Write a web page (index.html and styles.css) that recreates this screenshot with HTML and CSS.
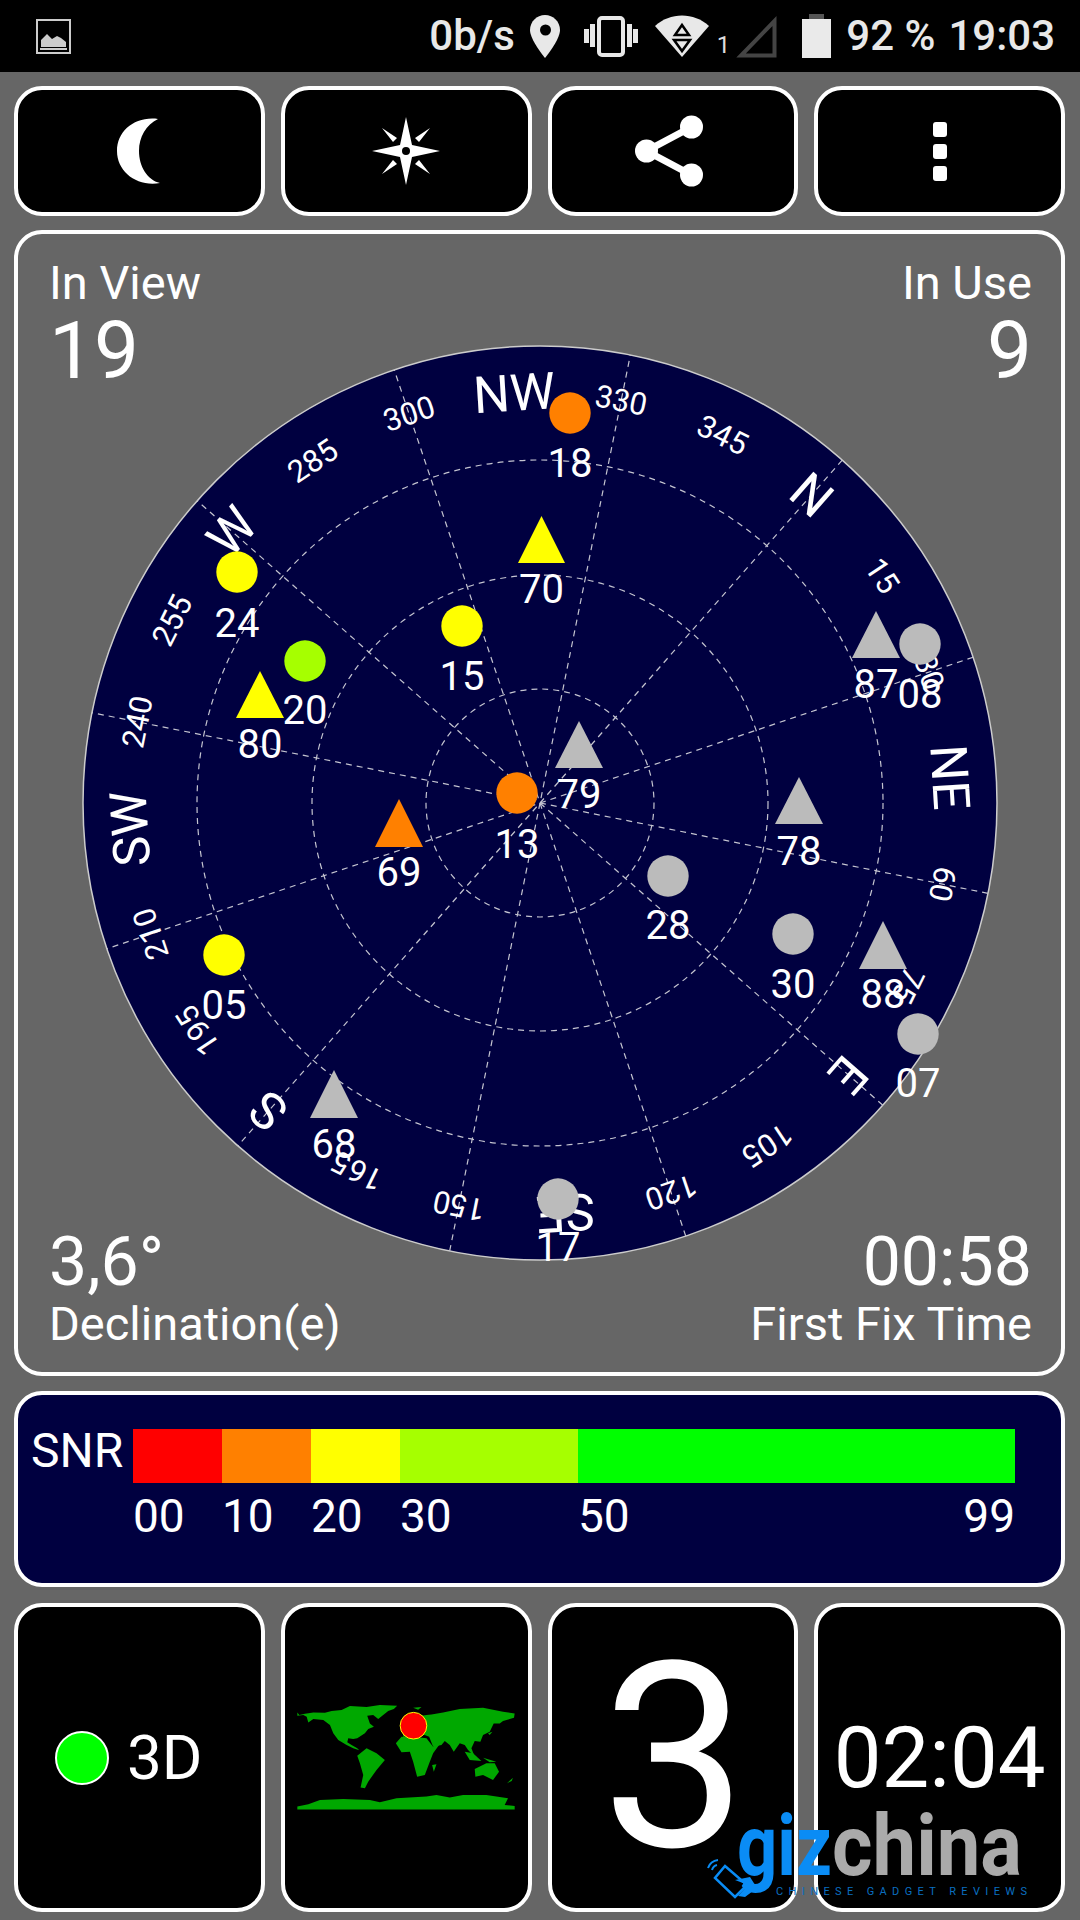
FILE: index.html
```html
<!DOCTYPE html>
<html>
<head>
    <title>GPS Test</title>
    <link rel="stylesheet" href="styles.css">
</head>
<body>
    <div class="statusbar">
        <svg class="ic-image" width="35" height="35" viewBox="0 0 35 35">
            <rect x="1" y="1" width="33" height="33" fill="none" stroke="#ccc" stroke-width="2"/>
            <path d="M5 28V21L11 15L16 20L21 17L25 19L30 23V28Z" fill="#ccc"/>
            <rect x="4" y="29" width="27" height="2" fill="#ccc"/>
        </svg>
        <span class="st-text st-speed">0b/s</span>
        <svg class="ic-pin" width="30" height="43" viewBox="0 0 30 43">
            <path d="M15 0C6.7 0 0 6.7 0 15C0 25 15 43 15 43C15 43 30 25 30 15C30 6.7 23.3 0 15 0Z" fill="#e8e8e8"/>
            <circle cx="15.5" cy="15" r="5.5" fill="#000"/>
        </svg>
        <svg class="ic-vibrate" width="54" height="41" viewBox="0 0 54 41">
            <rect x="15" y="2" width="24" height="37" rx="3" fill="none" stroke="#e8e8e8" stroke-width="4"/>
            <rect x="0" y="13" width="5" height="14" fill="#e8e8e8"/>
            <rect x="6" y="8" width="5" height="23" fill="#e8e8e8"/>
            <rect x="43" y="8" width="5" height="23" fill="#e8e8e8"/>
            <rect x="49" y="13" width="5" height="14" fill="#e8e8e8"/>
        </svg>
        <svg class="ic-wifi" width="54" height="43" viewBox="0 0 54 43">
            <path d="M0 11C15 -3 39 -3 54 11L27 42Z" fill="#e8e8e8"/>
            <path d="M27 10L34 20H20Z" fill="#e8e8e8" stroke="#000" stroke-width="2.5"/>
            <path d="M19 25H35L27 36Z" fill="#e8e8e8" stroke="#000" stroke-width="2.5"/>
        </svg>
        <span class="st-sim">1</span>
        <svg class="ic-signal" width="42" height="43" viewBox="0 0 42 43">
            <path d="M39.500 6V40.500H6Z" fill="none" stroke="#444" stroke-width="4"/>
        </svg>
        <svg class="ic-battery" width="29" height="44" viewBox="0 0 29 44">
            <rect x="7" y="0" width="15" height="6" fill="#555"/>
            <rect x="0" y="5" width="29" height="39" fill="#eaeaea"/>
        </svg>
        <span class="st-text st-batt">92 %</span>
        <span class="st-text st-time">19:03</span>
    </div>

    <div class="screen">
        <div class="toolbar">
            <div class="card">
                <svg width="44" height="66" viewBox="0 0 44 66">
                    <path d="M41 1C18 -2 0 13 0 33C0 54 20 69 43 65C30 62 22 48 22 33C22 19 29 7 41 1Z" fill="#fff"/>
                </svg>
            </div>
            <div class="card">
                <svg width="70" height="70" viewBox="-35 -35 70 70">
                    <path d="M0 -34L6 -6L34 0L6 6L0 34L-6 6L-34 0L-6 -6Z" fill="#fff"/>
                    <path d="M-24 -23L-9 -13L-13 -9Z M24 -23L9 -13L13 -9Z M-24 23L-9 13L-13 9Z M24 23L9 13L13 9Z" fill="#fff"/>
                    <circle r="4" fill="#000"/>
                </svg>
            </div>
            <div class="card">
                <svg class="ic-share" width="68" height="72" viewBox="0 0 68 72">
                    <path d="M56.500 12L11.500 36L56.500 60" fill="none" stroke="#fff" stroke-width="7"/>
                    <circle cx="56.500" cy="12" r="11.500" fill="#fff"/>
                    <circle cx="11.500" cy="36" r="11.500" fill="#fff"/>
                    <circle cx="56.500" cy="60" r="11.500" fill="#fff"/>
                </svg>
            </div>
            <div class="card">
                <div class="dots"><i></i><i></i><i></i></div>
            </div>
        </div>

        <div class="sky-panel">
            <div class="sky-row">
                <div>
                    <div class="sky-label">In View</div>
                    <div class="sky-count">19</div>
                </div>
                <div class="right">
                    <div class="sky-label">In Use</div>
                    <div class="sky-count">9</div>
                </div>
            </div>

            <svg class="sky-plot" width="930" height="930" viewBox="75 338 930 930">
                <g transform="translate(540 803)">
                    <circle class="disc" r="457"/>
                    <circle class="grid" r="114"/>
                    <circle class="grid" r="228"/>
                    <circle class="grid" r="343"/>
                    <g class="grid">
                        <path transform="rotate(41.4)" d="M0 -457V457"/>
                        <path transform="rotate(71.4)" d="M0 -457V457"/>
                        <path transform="rotate(101.4)" d="M0 -457V457"/>
                        <path transform="rotate(131.4)" d="M0 -457V457"/>
                        <path transform="rotate(161.4)" d="M0 -457V457"/>
                        <path transform="rotate(191.4)" d="M0 -457V457"/>
                    </g>
                    <g class="compass">
                        <text transform="rotate(41.4)" y="-393">N</text>
                        <text transform="rotate(86.4)" y="-393">NE</text>
                        <text transform="rotate(131.4)" y="-393">E</text>
                        <text transform="rotate(176.4)" y="-393">SE</text>
                        <text transform="rotate(221.4)" y="-393">S</text>
                        <text transform="rotate(266.4)" y="-393">SW</text>
                        <text transform="rotate(311.4)" y="-393">W</text>
                        <text transform="rotate(356.4)" y="-393">NW</text>
                    </g>
                    <g class="degrees">
                        <text transform="rotate(56.4)" y="-400">15</text>
                        <text transform="rotate(71.4)" y="-400">30</text>
                        <text transform="rotate(101.4)" y="-400">60</text>
                        <text transform="rotate(116.4)" y="-400">75</text>
                        <text transform="rotate(146.4)" y="-400">105</text>
                        <text transform="rotate(161.4)" y="-400">120</text>
                        <text transform="rotate(191.4)" y="-400">150</text>
                        <text transform="rotate(206.4)" y="-400">165</text>
                        <text transform="rotate(236.4)" y="-400">195</text>
                        <text transform="rotate(251.4)" y="-400">210</text>
                        <text transform="rotate(281.4)" y="-400">240</text>
                        <text transform="rotate(296.4)" y="-400">255</text>
                        <text transform="rotate(326.4)" y="-400">285</text>
                        <text transform="rotate(341.4)" y="-400">300</text>
                        <text transform="rotate(11.4)" y="-400">330</text>
                        <text transform="rotate(26.4)" y="-400">345</text>
                    </g>
                </g>

                <!-- satellites -->
                <circle class="s-orange" cx="570" cy="413" r="20.700"/>
                <text class="sat" x="570" y="477">18</text>
                <path class="s-yellow" d="M541.500 516L565 563H518Z"/>
                <text class="sat" x="541.500" y="603">70</text>
                <circle class="s-yellow" cx="237" cy="572" r="20.700"/>
                <text class="sat" x="237" y="637">24</text>
                <circle class="s-lime" cx="305" cy="661" r="20.700"/>
                <text class="sat" x="305" y="724">20</text>
                <circle class="s-yellow" cx="462" cy="626" r="20.700"/>
                <text class="sat" x="462" y="690">15</text>
                <path class="s-yellow" d="M260 671L284 718H236Z"/>
                <text class="sat" x="260" y="758">80</text>
                <path class="s-orange" d="M399 799L423 847H375Z"/>
                <text class="sat" x="399" y="886">69</text>
                <circle class="s-orange" cx="517" cy="793" r="20.700"/>
                <text class="sat" x="517" y="858">13</text>
                <path class="s-grey" d="M579 721L603 768H555Z"/>
                <text class="sat" x="579" y="808">79</text>
                <path class="s-grey" d="M799 777L823 824H775Z"/>
                <text class="sat" x="799" y="865">78</text>
                <path class="s-grey" d="M876 611L900 658H852Z"/>
                <text class="sat" x="876" y="698">87</text>
                <circle class="s-grey" cx="920" cy="644" r="20.700"/>
                <text class="sat" x="920" y="708">08</text>
                <circle class="s-grey" cx="668" cy="876" r="20.700"/>
                <text class="sat" x="668" y="939">28</text>
                <circle class="s-grey" cx="793" cy="934" r="20.700"/>
                <text class="sat" x="793" y="998">30</text>
                <path class="s-grey" d="M883 921L907 969H859Z"/>
                <text class="sat" x="883" y="1008">88</text>
                <circle class="s-grey" cx="918" cy="1034" r="20.700"/>
                <text class="sat" x="918" y="1097">07</text>
                <circle class="s-yellow" cx="224" cy="955" r="20.700"/>
                <text class="sat" x="224" y="1019">05</text>
                <path class="s-grey" d="M334 1070L358 1118H310Z"/>
                <text class="sat" x="334" y="1158">68</text>
                <circle class="s-grey" cx="558" cy="1199" r="20.700"/>
                <text class="sat" x="558" y="1261">17</text>
            </svg>

            <div class="sky-row">
                <div>
                    <div class="sky-value">3,6°</div>
                    <div class="sky-label">Declination(e)</div>
                </div>
                <div class="right">
                    <div class="sky-value">00:58</div>
                    <div class="sky-label">First Fix Time</div>
                </div>
            </div>
        </div>

        <div class="snr-panel">
            <div class="snr-title">SNR</div>
            <div class="seg seg-red"></div>
            <div class="seg seg-orange"></div>
            <div class="seg seg-yellow"></div>
            <div class="seg seg-lime"></div>
            <div class="seg seg-green"></div>
            <div class="snr-num snr-first">00</div>
            <div class="snr-num">10</div>
            <div class="snr-num">20</div>
            <div class="snr-num">30</div>
            <div class="snr-num snr-last"><span>50</span><span>99</span></div>
        </div>

        <div class="bottom-row">
            <div class="card fix-card">
                <div class="fix-dot"></div>
                <div class="fix-text">3D</div>
            </div>
            <div class="card">
                <svg width="218" height="105" viewBox="81 70 655 315">
                    <g fill="#00a800">
                        <path d="M82 92L88 100L105 96L130 92L165 93L185 88L215 85L240 73L290 76L330 70L382 72L372 82L355 88L340 100L325 112L310 100L292 102L300 125L312 135L295 142L285 155L262 170L250 172L235 170L232 182L245 190L262 200L268 206L250 200L230 190L205 175L190 155L180 130L160 115L130 112L115 122L110 105L100 100L82 102Z"/>
                        <path d="M262 222L290 200L320 215L345 235L320 265L295 300L285 320L272 318L280 280L270 245Z"/>
                        <path d="M378 185L395 165L430 165L470 170L490 195L515 180L490 215L480 240L465 280L442 285L430 240L420 210L395 212Z"/>
                        <path d="M400 110L470 100L485 98L520 92L570 82L640 78L700 90L735 95L733 108L700 118L690 125L672 125L660 150L640 160L632 180L615 178L605 200L615 225L595 205L585 190L570 185L552 210L540 190L525 178L515 190L490 195L478 165L465 160L400 165Z"/>
                        <path d="M615 262L650 245L675 245L688 270L670 295L640 280L617 285Z"/>
                        <path d="M585 210L610 215L635 238L600 235Z M640 228L680 240L660 242Z"/>
                        <path d="M487 250L500 248L492 270Z M712 305L730 288L726 298Z M430 78L455 76L445 84Z M655 155L668 150L660 160Z"/>
                        <path d="M82 375L115 368L150 355L220 352L300 355L330 362L380 350L470 345L500 340L540 348L580 340L650 340L715 350L705 370L735 373V384H82Z"/>
                    </g>
                    <circle cx="431" cy="132" r="40" fill="#f00" stroke="#ff0" stroke-width="3"/>
                </svg>
            </div>
            <div class="card"><div class="big-digit">3</div></div>
            <div class="card"><div class="clock">02:04</div></div>

            <svg class="logo" width="335" height="90" viewBox="705 1815 335 90">
                <g fill="none" stroke="#0a8cf5" stroke-width="2">
                    <path d="M708 1868A12 12 0 0 1 718 1860"/>
                    <path d="M712 1870A7 7 0 0 1 717 1865"/>
                </g>
                <path d="M725 1866L747 1885L735 1897L715 1878Z" fill="none" stroke="#0a8cf5" stroke-width="2.500"/>
                <path d="M735 1880L750 1877L757 1888L745 1897L738 1896L748 1885Z" fill="#0a8cf5"/>
                <text class="logo-giz" x="737" y="1875" textLength="95" lengthAdjust="spacingAndGlyphs">giz</text>
                <text class="logo-china" x="832" y="1875" textLength="190" lengthAdjust="spacingAndGlyphs">china</text>
                <text class="logo-tag" x="776" y="1895" textLength="251">CHINESE GADGET REVIEWS</text>
            </svg>
        </div>
    </div>
</body>
</html>
```

FILE: styles.css
```css
body {
    margin: 0;
    width: 1080px;
    height: 1920px;
    overflow: hidden;
    background-color: #666;
    color: #fff;
    font-family: Roboto, "Liberation Sans", sans-serif;
}

/* status bar */
.statusbar {
    height: 72px;
    background-color: #000;
    display: flex;
    align-items: center;
    padding: 0 25px 0 36px;
    box-sizing: border-box;
}
.statusbar svg {
    display: block;
    flex: none;
}
.st-text {
    font-size: 42px;
    font-weight: 500;
    line-height: 72px;
    color: #e8e8e8;
}
.st-speed { margin-left: auto; }
.ic-pin { margin-left: 15px; }
.ic-vibrate { margin-left: 24px; }
.ic-wifi { margin-left: 17px; }
.st-sim {
    margin-left: 8px;
    font-size: 24px;
    color: #ddd;
    align-self: flex-end;
    line-height: 28px;
    margin-bottom: 13px;
}
.ic-signal { margin-left: 5px; }
.ic-battery { margin-left: 25px; }
.st-batt { margin-left: 15px; }
.st-time { margin-left: 13px; }

/* layout */
.screen {
    display: flex;
    flex-direction: column;
    padding: 14px 15px 14px 14px;
    gap: 14px;
}
.toolbar {
    display: grid;
    grid-template-columns: repeat(4, 1fr);
    gap: 16px;
    height: 130px;
}
.bottom-row {
    display: grid;
    grid-template-columns: repeat(4, 1fr);
    gap: 16px;
    height: 303px;
    margin-top: 2px;
    position: relative;
}
.card {
    background-color: #000;
    border: 4px solid #fff;
    border-radius: 28px;
    box-sizing: border-box;
    display: flex;
    align-items: center;
    justify-content: center;
}
.ic-share { margin-right: 8px; }
.dots {
    display: flex;
    flex-direction: column;
    gap: 7px;
}
.dots i {
    display: block;
    width: 14px;
    height: 15px;
    border-radius: 3px;
    background-color: #fff;
}

/* sky view */
.sky-panel {
    position: relative;
    height: 1146px;
    box-sizing: border-box;
    border: 4px solid #fff;
    border-radius: 28px;
    padding: 22px 29px 21px 31px;
    display: flex;
    flex-direction: column;
    justify-content: space-between;
}
.sky-row {
    display: flex;
    justify-content: space-between;
}
.right { text-align: right; }
.sky-label {
    font-size: 47px;
    line-height: 54px;
}
.sky-count {
    font-size: 80px;
    line-height: 82px;
}
.sky-value {
    font-size: 68px;
    line-height: 70px;
}
.sky-plot {
    position: absolute;
    left: 57px;
    top: 104px;
    overflow: visible;
}
.disc {
    fill: #000040;
    stroke: #ccc;
    stroke-width: 1.5;
}
.grid {
    fill: none;
    stroke: #c4c4d0;
    stroke-width: 1.2;
    stroke-dasharray: 6 5;
}
.compass text {
    fill: #fff;
    font-size: 51px;
    text-anchor: middle;
}
.degrees text {
    fill: #fff;
    font-size: 31px;
    text-anchor: middle;
}
.sat {
    fill: #fff;
    font-size: 40px;
    text-anchor: middle;
}
.s-orange { fill: #ff8000; }
.s-yellow { fill: #ffff00; }
.s-lime { fill: #a6ff00; }
.s-grey { fill: #bbbbbb; }

/* snr legend */
.snr-panel {
    height: 196px;
    margin-top: 1px;
    box-sizing: border-box;
    background-color: #000040;
    border: 4px solid #fff;
    border-radius: 28px;
    padding: 34px 46px 0 115px;
    display: grid;
    grid-template-columns: 89px 89px 89px 178px 1fr;
    grid-template-rows: 54px auto;
    position: relative;
}
.snr-title {
    position: absolute;
    left: 13px;
    top: 28px;
    font-size: 48px;
    line-height: 56px;
}
.seg-red { background-color: #ff0000; }
.seg-orange { background-color: #ff8000; }
.seg-yellow { background-color: #ffff00; }
.seg-lime { background-color: #a6ff00; }
.seg-green { background-color: #00ff00; }
.snr-num {
    font-size: 46px;
    line-height: 52px;
    margin-top: 7px;
}
.snr-last {
    display: flex;
    justify-content: space-between;
}

/* bottom tiles */
.fix-card {
    justify-content: flex-start;
    padding-left: 37px;
}
.fix-dot {
    width: 54px;
    height: 54px;
    box-sizing: border-box;
    border-radius: 50%;
    border: 2px solid #fff;
    background-color: #00ff00;
}
.fix-text {
    font-size: 62px;
    margin-left: 18px;
}
.big-digit {
    font-size: 259px;
    line-height: 301px;
    padding-left: 3px;
}
.clock {
    font-size: 85px;
}
.logo {
    position: absolute;
    left: 691px;
    top: 212px;
    overflow: visible;
}
.logo-giz {
    fill: #0a8cf5;
    font-size: 85px;
    font-weight: 700;
}
.logo-china {
    fill: #aaaaaa;
    font-size: 85px;
    font-weight: 700;
}
.logo-tag {
    fill: #0a6fc0;
    font-size: 11px;
}
```
